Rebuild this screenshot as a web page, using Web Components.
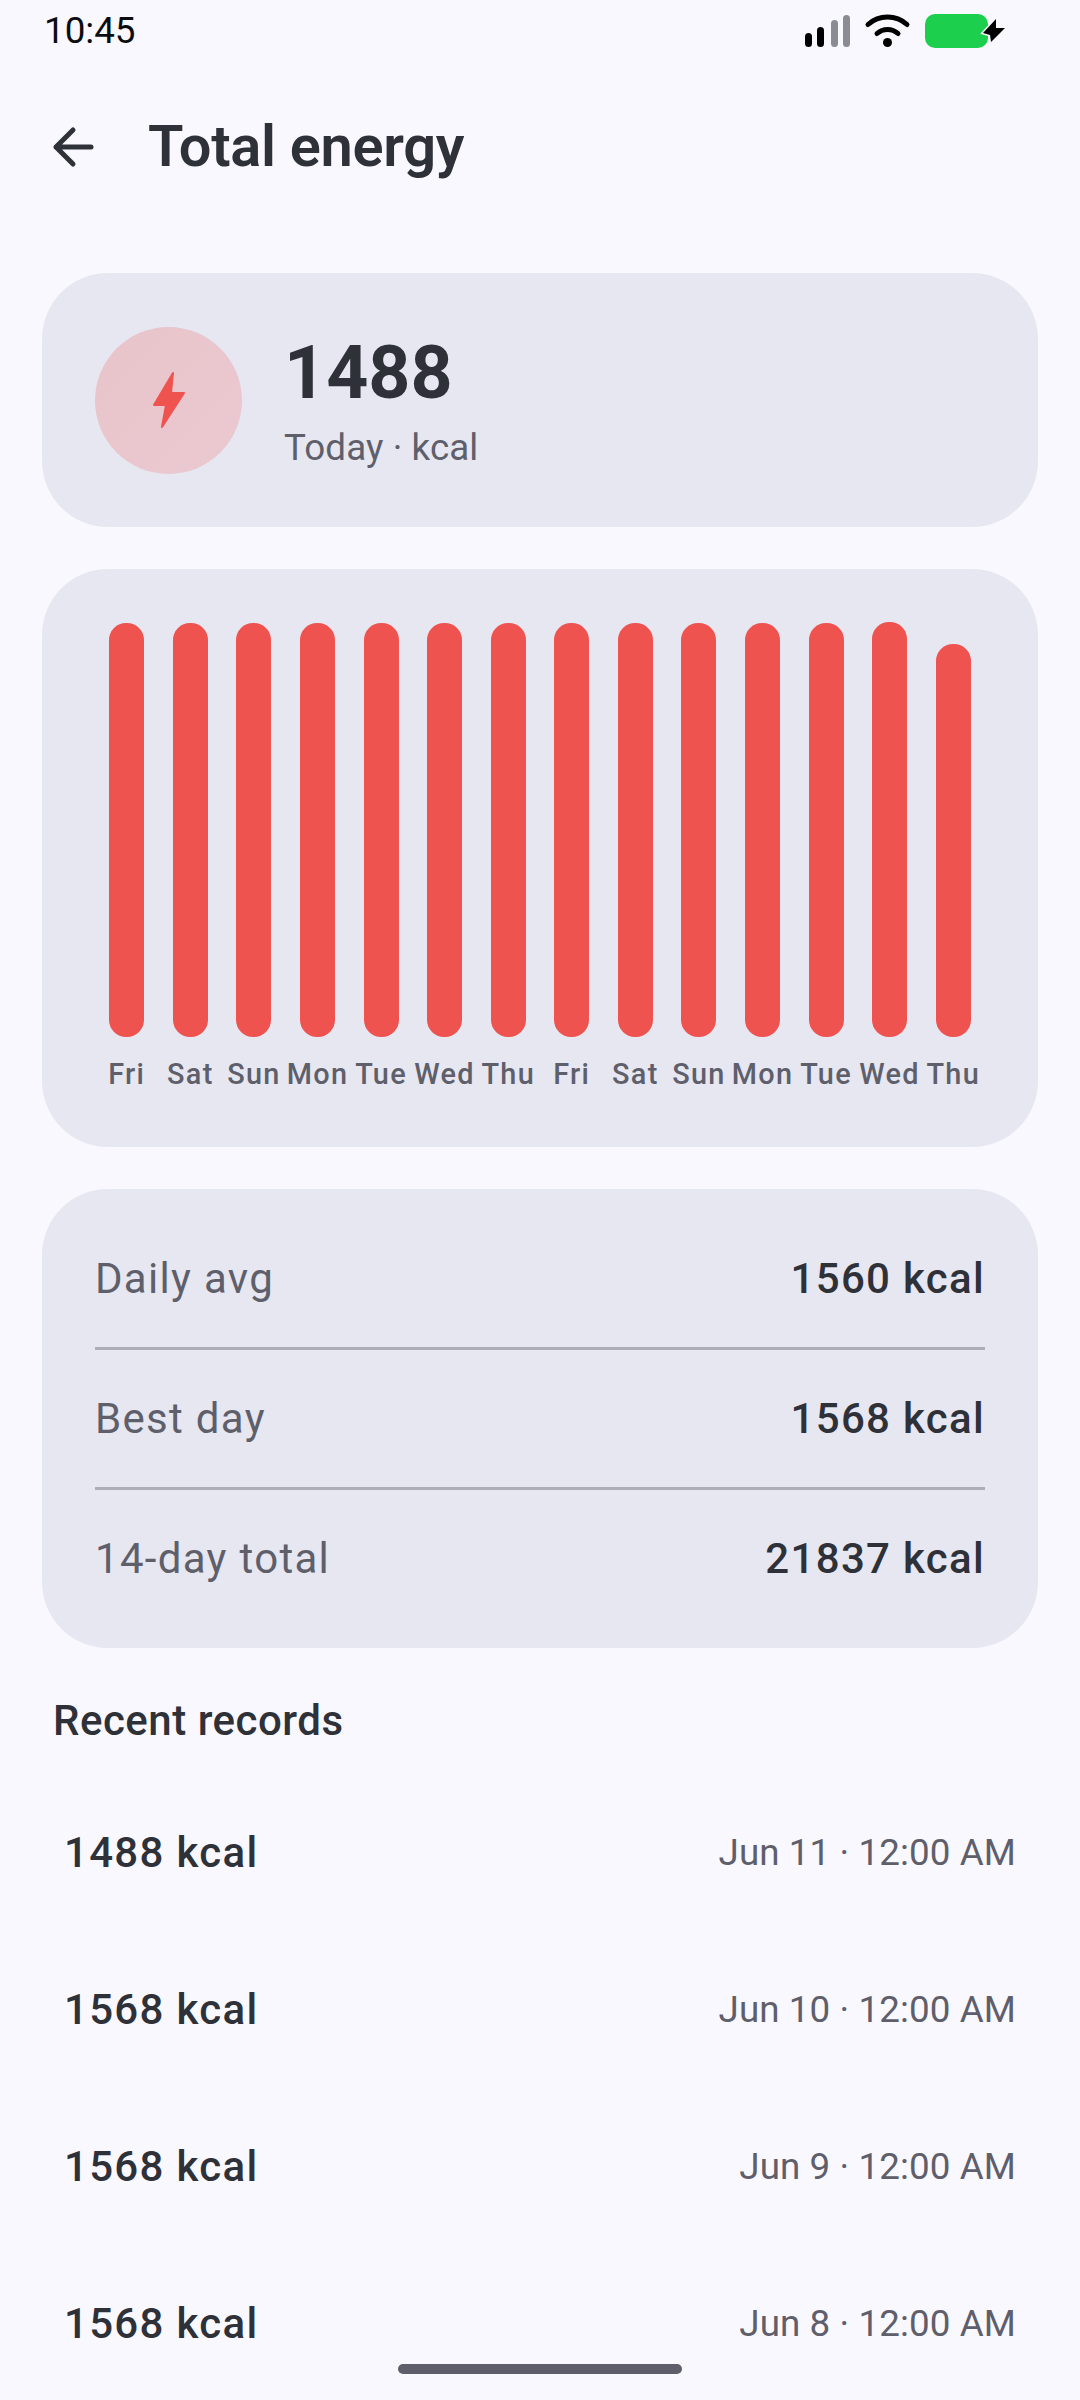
<!DOCTYPE html>
<html>
<head>
<meta charset="utf-8">
<title>Total energy</title>
<style>
    html, body {
        margin: 0;
        height: 2400px;
        overflow: hidden;
        background: #faf8ff;
        color: #2f3139;
        font-family: Roboto, "Liberation Sans", sans-serif;
    }
    energy-page { display: block; }
</style>
</head>
<body>
<energy-page>
    <status-bar time="10:45"></status-bar>
    <top-bar title="Total energy"></top-bar>
    <summary-card value="1488" caption="Today · kcal"></summary-card>
    <bar-chart
        heights="414,414,414,414,414,414,414,414,414,414,414,414,415,393"
        labels="Fri,Sat,Sun,Mon,Tue,Wed,Thu,Fri,Sat,Sun,Mon,Tue,Wed,Thu"></bar-chart>
    <stat-card>
        <stat-row label="Daily avg" value="1560 kcal"></stat-row>
        <stat-row label="Best day" value="1568 kcal"></stat-row>
        <stat-row label="14-day total" value="21837 kcal" last></stat-row>
    </stat-card>
    <record-list title="Recent records">
        <record-row value="1488 kcal" date="Jun 11 · 12:00 AM"></record-row>
        <record-row value="1568 kcal" date="Jun 10 · 12:00 AM"></record-row>
        <record-row value="1568 kcal" date="Jun 9 · 12:00 AM"></record-row>
        <record-row value="1568 kcal" date="Jun 8 · 12:00 AM"></record-row>
    </record-list>
    <gesture-pill></gesture-pill>
</energy-page>

<script>
function define(name, css, html) {
    customElements.define(name, class extends HTMLElement {
        connectedCallback() {
            if (this.shadowRoot) return;
            const shadow = this.attachShadow({ mode: "open" });
            const temp = document.createElement("template");
            temp.innerHTML = `<style>${css}</style>${typeof html == "function" ? html(this) : html}`;
            shadow.appendChild(temp.content.cloneNode(true));
        }
    });
}

define("energy-page", `
    :host { display: flex; flex-direction: column; height: 2400px; position: relative; }
`, `<slot></slot>`);

define("status-bar", `
    :host { display: flex; align-items: center; justify-content: space-between; height: 60px; padding: 0 75px 0 44px; color: #0c0d10; font-size: 36.75px; }
    svg { display: block; }
`, (el) => `
    <span>${el.getAttribute("time")}</span>
    <svg width="200" height="60" viewBox="805 0 200 60">
        <rect x="805" y="33" width="7" height="14" rx="3.5" fill="#000"/>
        <rect x="817" y="27" width="7" height="20" rx="3.5" fill="#000"/>
        <rect x="831" y="20" width="7" height="27" rx="3.5" fill="#8b8b93"/>
        <rect x="843" y="15" width="7" height="32" rx="3.5" fill="#8b8b93"/>
        <path d="M868 24.5C879 14.5 896 14.5 907 24.5" fill="none" stroke="#000" stroke-width="5" stroke-linecap="round"/>
        <path d="M877 33.5C883 28 892 28 898 33.5" fill="none" stroke="#000" stroke-width="5" stroke-linecap="round"/>
        <circle cx="887.5" cy="42.5" r="4.5" fill="#000"/>
        <rect x="925" y="14" width="63" height="34" rx="10" fill="#1ccf4d"/>
        <path d="M996 19L983 33L990 35L991 42L1005 28L996 28Z" fill="#000" stroke="#faf8ff" stroke-width="3" paint-order="stroke"/>
    </svg>
`);

define("top-bar", `
    :host { display: flex; align-items: center; height: 174px; padding-left: 50px; margin-bottom: 39px; color: #2f3139; }
    svg { display: block; flex: none; }
    h1 { margin: 0 0 0 46px; font-size: 57.75px; font-weight: 600; letter-spacing: -0.3px; line-height: 1; white-space: nowrap; }
`, (el) => `
    <svg width="52" height="52" viewBox="0 0 52 52">
        <path d="M41 26H6M23 9L6 26L23 43" fill="none" stroke="#2f3139" stroke-width="5" stroke-linecap="round" stroke-linejoin="round"/>
    </svg>
    <h1>${el.getAttribute("title")}</h1>
`);

const cardCss = `background: #e6e7f1; border-radius: 66px; margin: 0 42px;`;

define("summary-card", `
    :host { display: flex; align-items: center; gap: 42px; height: 254px; padding: 0 53px; box-sizing: border-box; ${cardCss} margin-bottom: 42px; }
    .icon { width: 147px; height: 147px; flex: none; border-radius: 50%; background: linear-gradient(135deg, #e8c3ca, #ebc9d0); display: flex; align-items: center; justify-content: center; }
    svg { display: block; }
    .value { font-size: 73.5px; font-weight: 700; line-height: 84px; color: #2f3139; }
    .caption { margin-top: 11px; font-size: 36.75px; letter-spacing: 0.1px; line-height: 44px; color: #5e5f6b; }
`, (el) => `
    <div class="icon">
        <svg width="34" height="58" viewBox="0 0 34 58">
            <path d="M21 2L2 34H14L10 56L32 22H19L21 2Z" fill="#ef5350" stroke="#ef5350" stroke-width="2" stroke-linejoin="round"/>
        </svg>
    </div>
    <div>
        <div class="value">${el.getAttribute("value")}</div>
        <div class="caption">${el.getAttribute("caption")}</div>
    </div>
`);

define("bar-chart", `
    :host { display: block; height: 578px; padding: 53px 53px 0; box-sizing: border-box; ${cardCss} margin-bottom: 42px; }
    .grid { display: grid; grid-template-columns: repeat(14, 1fr); }
    .col { display: flex; flex-direction: column; align-items: center; min-width: 0; }
    .track { height: 415px; display: flex; align-items: flex-end; }
    .bar { width: 35px; background: #ef5350; border-radius: 17px; }
    .label { margin-top: 20px; font-size: 28.875px; line-height: 34px; font-weight: 500; letter-spacing: 1.31px; color: #5e5f6b; white-space: nowrap; }
`, (el) => {
    const heights = el.getAttribute("heights").split(",");
    const labels = el.getAttribute("labels").split(",");
    return `<div class="grid">${labels.map((label, i) => `
        <div class="col">
            <div class="track"><div class="bar" style="height:${heights[i]}px"></div></div>
            <div class="label">${label}</div>
        </div>`).join("")}</div>`;
});

define("stat-card", `
    :host { display: block; padding: 21px 53px; ${cardCss} }
`, `<slot></slot>`);

define("stat-row", `
    :host { display: flex; align-items: center; justify-content: space-between; height: 137px; border-bottom: 3px solid #adaeb9; font-size: 42px; letter-spacing: 1.31px; }
    :host([last]) { border-bottom: 0; }
    .label { color: #5e5f6b; }
    .value { color: #2f3139; font-weight: 500; }
`, (el) => `
    <span class="label">${el.getAttribute("label")}</span>
    <span class="value">${el.getAttribute("value")}</span>
`);

define("record-list", `
    :host { display: block; padding: 49px 64px 0 53px; }
    h2 { margin: 0 0 29px; font-size: 42px; line-height: 48px; font-weight: 500; letter-spacing: 0.5px; color: #2f3139; }
    .rows { padding-left: 11px; }
`, (el) => `
    <h2>${el.getAttribute("title")}</h2>
    <div class="rows"><slot></slot></div>
`);

define("record-row", `
    :host { display: flex; align-items: center; justify-content: space-between; height: 157px; }
    .value { font-size: 42px; font-weight: 500; letter-spacing: 1.31px; color: #2f3139; }
    .date { font-size: 36.75px; letter-spacing: 0.1px; color: #5e5f6b; }
`, (el) => `
    <span class="value">${el.getAttribute("value")}</span>
    <span class="date">${el.getAttribute("date")}</span>
`);

define("gesture-pill", `
    :host { position: absolute; left: 398px; top: 2364px; width: 284px; height: 10px; border-radius: 5px; background: #5e5f6b; }
`, ``);
</script>
</body>
</html>
